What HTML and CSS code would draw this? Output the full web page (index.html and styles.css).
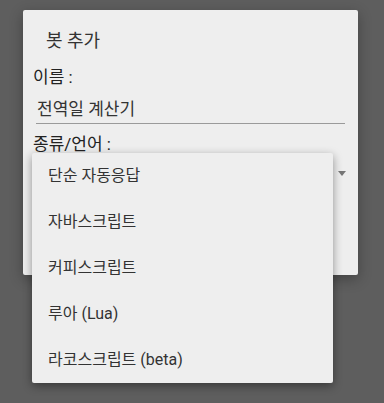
FILE: index.html
```html
<!DOCTYPE html>
<html lang="ko">
<head>
<meta charset="utf-8">
<link rel="stylesheet" href="styles.css">
</head>
<body>
<div class="screen">
  <div class="dialog">
    <div class="title">봇 추가</div>
    <div class="label">이름 :</div>
    <div class="input">전역일 계산기</div>
    <div class="label label-type">종류/언어 :</div>
    <div class="spinner"><span class="arrow"></span></div>
  </div>
  <ul class="menu">
    <li>단순 자동응답</li>
    <li>자바스크립트</li>
    <li>커피스크립트</li>
    <li>루아 (Lua)</li>
    <li>라코스크립트 (beta)</li>
  </ul>
</div>
</body>
</html>
```
FILE: styles.css
```css
html, body {
  margin: 0;
  padding: 0;
  background: #5e5e5e;
}
body {
  font-family: Roboto, "Noto Sans CJK KR", sans-serif;
  width: 384px;
  height: 403px;
  overflow: hidden;
}
.screen {
  position: relative;
  width: 384px;
  height: 403px;
  padding-top: 10px;
  box-sizing: border-box;
}
.dialog {
  margin-left: 23px;
  width: 335px;
  height: 265px;
  background: #eeeeee;
  border-radius: 2px;
  box-shadow: 0 4px 14px rgba(0,0,0,0.3);
  padding: 0 10px;
  box-sizing: border-box;
}
.title {
  padding: 18px 0 0 13px;
  font-size: 18px;
  line-height: 26px;
  color: #333;
}
.label {
  margin-top: 11px;
  font-size: 17px;
  line-height: 24px;
  font-weight: 400;
  color: #222;
}
.input {
  margin: 8px 3px 0 3px;
  font-size: 17px;
  line-height: 24px;
  color: #333;
  padding-left: 1px;
  padding-bottom: 2px;
  border-bottom: 1px solid #9a9a9a;
}
.label-type {
  margin-top: 8px;
}
.spinner {
  display: flex;
  justify-content: flex-end;
  padding: 15px 2px 0 0;
}
.arrow {
  width: 0;
  height: 0;
  border-left: 4px solid transparent;
  border-right: 4px solid transparent;
  border-top: 5px solid #777;
}
.menu {
  position: absolute;
  left: 32px;
  top: 153px;
  width: 301px;
  margin: 0;
  padding: 0;
  list-style: none;
  background: #eeeeee;
  border-radius: 2px;
  box-shadow: 0 3px 10px rgba(0,0,0,0.4);
}
.menu li {
  height: 46px;
  line-height: 46px;
  padding-left: 16px;
  font-size: 16px;
  color: #333;
}
```
